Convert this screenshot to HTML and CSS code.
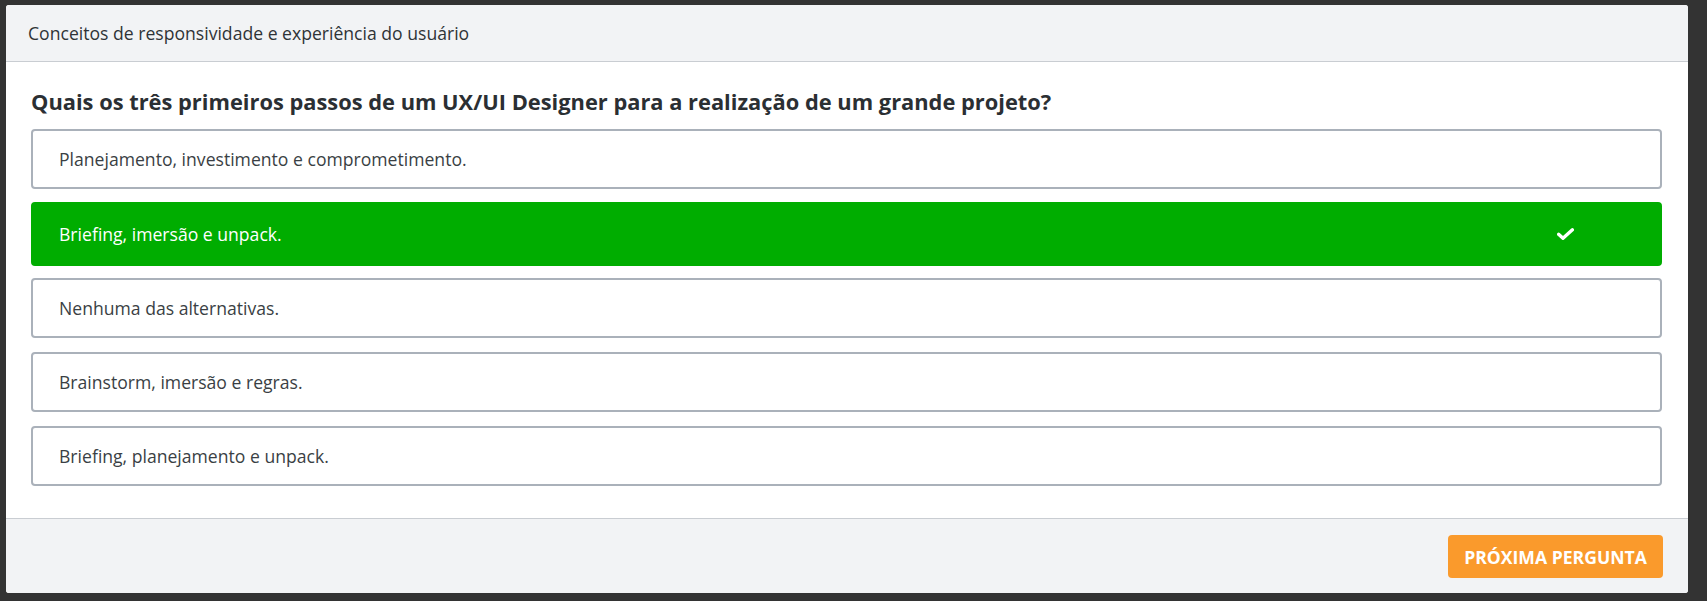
FILE: index.html
```html
<!DOCTYPE html>
<html lang="pt-BR">
<head>
<meta charset="utf-8">
<title>Quiz</title>
<link rel="stylesheet" href="styles.css">
</head>
<body>
<div class="card">
  <div class="card-header">Conceitos de responsividade e experiência do usuário</div>
  <div class="card-body">
    <h2 class="question">Quais os três primeiros passos de um UX/UI Designer para a realização de um grande projeto?</h2>
    <div class="options">
      <div class="option">Planejamento, investimento e comprometimento.</div>
      <div class="option correct">
        <span>Briefing, imersão e unpack.</span>
        <svg class="check" width="17" height="12" viewBox="0 0 17 12" aria-hidden="true">
          <path d="M1.6 6.3 L6 10.2 L15.4 1.8" fill="none" stroke="#fff" stroke-width="3.4" stroke-linecap="round" stroke-linejoin="round"/>
        </svg>
      </div>
      <div class="option">Nenhuma das alternativas.</div>
      <div class="option">Brainstorm, imersão e regras.</div>
      <div class="option">Briefing, planejamento e unpack.</div>
    </div>
  </div>
  <div class="card-footer">
    <button class="btn-next">Próxima pergunta</button>
  </div>
</div>
</body>
</html>
```

FILE: styles.css
```css
* { box-sizing: border-box; }
html, body { margin: 0; padding: 0; }
body {
  background: #333333;
  font-family: "Open Sans", "Noto Sans", sans-serif;
  color: #2f3337;
  padding: 5px 19px 8px 6px;
  height: 601px;
  overflow: hidden;
}
.card {
  width: 1682px;
  background: #ffffff;
  border-radius: 3px;
  overflow: hidden;
}
.card-header {
  height: 57px;
  background: #f2f3f5;
  border-bottom: 1px solid #c9cdd2;
  padding: 0 22px;
  display: flex;
  align-items: center;
  font-size: 17.6px;
  color: #2f3337;
}
.card-body {
  padding: 25px 26px 32px 25px;
}
.question {
  margin: 0 0 12px 0;
  font-size: 21.85px;
  line-height: 30px;
  font-weight: 700;
  color: #2b2f33;
}
.options {
  display: flex;
  flex-direction: column;
  gap: 14px;
}
.option {
  height: 60px;
  border: 2px solid #aab1ba;
  border-radius: 4px;
  padding: 0 86px 0 26px;
  display: flex;
  align-items: center;
  justify-content: space-between;
  font-size: 17.6px;
  color: #3a3f44;
}
.option.correct {
  height: 64px;
  margin: -1px 0 -2px 0;
  background: #00ad00;
  border-color: #00ad00;
  color: #ffffff;
}
.check { display: block; }
.card-footer {
  height: 75px;
  background: #f2f3f5;
  border-top: 1px solid #c9cdd2;
  display: flex;
  justify-content: flex-end;
  align-items: flex-start;
  padding: 16px 25px 0 0;
}
.btn-next {
  height: 43px;
  width: 215px;
  background: #fa9a2c;
  border: none;
  border-radius: 4px;
  color: #ffffff;
  font-family: "Open Sans", "Noto Sans", sans-serif;
  font-weight: 700;
  font-size: 17.6px;
  text-transform: uppercase;
  padding: 0;
}
```
